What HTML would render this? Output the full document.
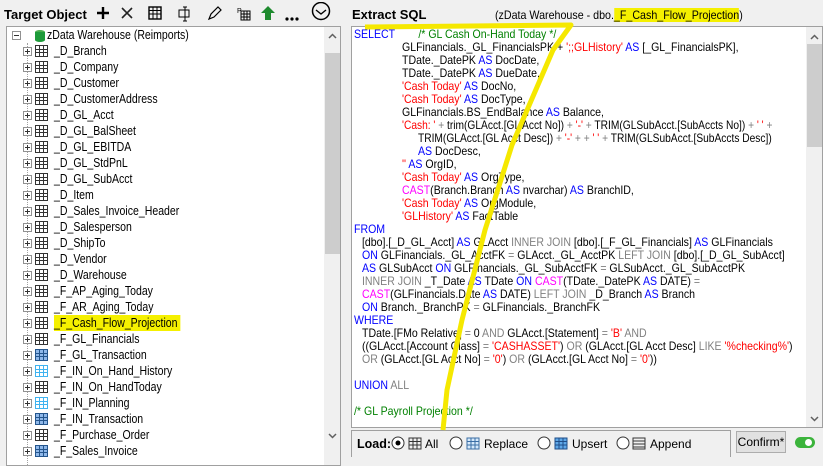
<!DOCTYPE html>
<html><head><meta charset="utf-8"><style>
*{margin:0;padding:0;box-sizing:border-box}
body{width:823px;height:456px;background:#f0f0f0;font-family:"Liberation Sans",sans-serif;font-size:12px;position:relative;overflow:hidden;color:#000}
.abs{position:absolute;white-space:nowrap}
.lp{position:absolute;left:6px;top:26px;width:335px;height:440px;border:1px solid #a0a0a0;background:#fff;overflow:hidden}
.sb{position:absolute;left:317px;top:0;width:17px;height:440px;background:#f0f0f0}
.thumb{position:absolute;left:1px;top:26px;width:15px;height:201px;background:#cdcdcd}
.row{position:absolute;left:0;height:16px;font-size:13px;line-height:16px;white-space:nowrap;width:310px}
.exp{position:absolute;width:9px;height:9px;border:1px solid #919191;background:#fff;top:4px}
.exp:before{content:"";position:absolute;left:1px;top:3px;width:5px;height:1px;background:#333}
.exp.p:after{content:"";position:absolute;left:3px;top:1px;width:1px;height:5px;background:#333}
.gi{position:absolute;left:28px;top:2px;width:13px;height:12px;border:1px solid #333;
background:linear-gradient(#333,#333) 0 3px/100% 1px no-repeat,linear-gradient(#333,#333) 0 6px/100% 1px no-repeat,linear-gradient(#333,#333) 3px 0/1px 100% no-repeat,linear-gradient(#333,#333) 7px 0/1px 100% no-repeat,#fff}
.gi.b{border-color:#24558d;background:linear-gradient(#24558d,#24558d) 0 3px/100% 1px no-repeat,linear-gradient(#24558d,#24558d) 0 6px/100% 1px no-repeat,linear-gradient(#24558d,#24558d) 3px 0/1px 100% no-repeat,linear-gradient(#24558d,#24558d) 7px 0/1px 100% no-repeat,#8fb8ea}
.gi.c{border-color:#3fb3f0;background:linear-gradient(#3fb3f0,#3fb3f0) 0 3px/100% 1px no-repeat,linear-gradient(#3fb3f0,#3fb3f0) 0 6px/100% 1px no-repeat,linear-gradient(#3fb3f0,#3fb3f0) 3px 0/1px 100% no-repeat,linear-gradient(#3fb3f0,#3fb3f0) 7px 0/1px 100% no-repeat,#fff}
.rt{position:absolute;left:47px;top:0;display:inline-block;transform:scaleX(.81);transform-origin:0 0}
.sql{position:absolute;left:351px;top:26px;width:472px;height:402px;border:1px solid #a0a0a0;background:#fff;overflow:hidden}
.sb2{position:absolute;left:454px;top:0;width:17px;height:400px;background:#f0f0f0}
.ln{position:absolute;font-size:12px;line-height:13px;white-space:nowrap;transform:scaleX(.88);transform-origin:0 0}
.k{color:#0000ff}.s{color:#ff0000}.g{color:#808080}.m{color:#ff00ff}.c{color:#008000}
.dot{position:absolute;width:1px;border-left:1px dotted #a0a0a0}
</style></head><body>
<div class="abs" style="left:4px;top:7px;font-weight:bold;font-size:13px">Target Object</div>
<svg class="abs" style="left:94px;top:2px" width="245" height="24" viewBox="0 0 245 24">
<path d="M9 5v12M3 11h12" stroke="#000" stroke-width="2.4"/>
<path d="M28 6l10 10M38 6L28 16" stroke="#222" stroke-width="1.6"/>
<rect x="55" y="5" width="12" height="12" fill="none" stroke="#000" stroke-width="1.4"/><path d="M55 8.5h12M55 12h12M59 5v12M63 5v12" stroke="#000"/>
<rect x="85" y="8" width="10" height="7" fill="none" stroke="#000"/><path d="M91 5v14M89 5h4M89 19h4" stroke="#000"/>
<path d="M115 17l2-5 7-7 3 3-7 7z M115 17l5-2" fill="none" stroke="#000" stroke-width="1.2"/>
<text x="143" y="11" font-size="7" font-family="Liberation Sans">P</text><rect x="147" y="9" width="9" height="9" fill="none" stroke="#000"/><path d="M147 12h9M147 15h9M150 9v9M153 9v9" stroke="#000"/>
<path d="M174 4l7 7h-4v7h-6v-7h-4z" fill="#1e8a2e"/>
<circle cx="193" cy="17" r="1.6"/><circle cx="198" cy="17" r="1.6"/><circle cx="203" cy="17" r="1.6"/>
<circle cx="227" cy="9" r="8.5" fill="none" stroke="#000" stroke-width="1.5"/><path d="M222 8l5 4 5-4" fill="none" stroke="#000" stroke-width="1.4"/>
</svg>
<div class="lp">
<div class="dot" style="top:16px;height:424px;left:20px"></div>
<div class="row" style="top:0;left:0"><div class="exp" style="left:5px"></div>
<svg style="position:absolute;left:27px;top:2px" width="12" height="13"><ellipse cx="6" cy="3" rx="5" ry="2" fill="#4caf50"/><rect x="1" y="3" width="10" height="8" fill="#1e9b3a"/><ellipse cx="6" cy="11" rx="5" ry="2" fill="#1e9b3a"/></svg>
<span class="rt" style="left:40px">zData Warehouse (Reimports)</span></div>
<div id="rows"></div>
<div class="sb"><svg style="position:absolute;left:4px;top:6px" width="9" height="6"><path d="M1 5l3.5-3.5L8 5" fill="none" stroke="#606060" stroke-width="1.5"/></svg><div class="thumb"></div>
<svg style="position:absolute;left:4px;top:406px" width="9" height="6"><path d="M1 1l3.5 3.5L8 1" fill="none" stroke="#606060" stroke-width="1.5"/></svg></div>
</div>
<div class="abs" style="left:352px;top:7px;font-weight:bold;font-size:13px">Extract SQL</div>
<div class="abs" style="left:495px;top:8px;font-size:12px;transform:scaleX(.89);transform-origin:0 0">(zData Warehouse - dbo.<span style="background:#f5f000">_F_Cash_Flow_Projection</span>)</div>
<div class="sql">
<div class="ln" style="left:2px;top:1px"><span class="k">SELECT</span> &nbsp; &nbsp; &nbsp; &nbsp;<span class="c">/* GL Cash On-Hand Today */</span></div>
<div class="ln" style="left:50px;top:14px">GLFinancials._GL_FinancialsPK + <span class="s">';;GLHistory'</span> <span class="k">AS</span> [_GL_FinancialsPK],</div>
<div class="ln" style="left:50px;top:27px">TDate._DatePK <span class="k">AS</span> DocDate,</div>
<div class="ln" style="left:50px;top:40px">TDate._DatePK <span class="k">AS</span> DueDate,</div>
<div class="ln" style="left:50px;top:53px"><span class="s">'Cash Today'</span> <span class="k">AS</span> DocNo,</div>
<div class="ln" style="left:50px;top:66px"><span class="s">'Cash Today'</span> <span class="k">AS</span> DocType,</div>
<div class="ln" style="left:50px;top:79px">GLFinancials.BS_EndBalance <span class="k">AS</span> Balance,</div>
<div class="ln" style="left:50px;top:92px;font-size:11.6px"><span class="s">'Cash: '</span> <span class="g">+</span> trim(GLAcct.[GL Acct No]) <span class="g">+</span> <span class="s">'-'</span> <span class="g">+</span> TRIM(GLSubAcct.[SubAccts No]) <span class="g">+</span> <span class="s">' '</span> <span class="g">+</span></div>
<div class="ln" style="left:66px;top:105px;font-size:11.6px">TRIM(GLAcct.[GL Acct Desc]) <span class="g">+</span> <span class="s">'-'</span> <span class="g">+ +</span> <span class="s">' '</span> <span class="g">+</span> TRIM(GLSubAcct.[SubAccts Desc])</div>
<div class="ln" style="left:66px;top:118px"><span class="k">AS</span> DocDesc,</div>
<div class="ln" style="left:50px;top:131px"><span class="s">''</span> <span class="k">AS</span> OrgID,</div>
<div class="ln" style="left:50px;top:144px"><span class="s">'Cash Today'</span> <span class="k">AS</span> OrgType,</div>
<div class="ln" style="left:50px;top:157px"><span class="m">CAST</span>(Branch.Branch <span class="k">AS</span> nvarchar) <span class="k">AS</span> BranchID,</div>
<div class="ln" style="left:50px;top:170px"><span class="s">'Cash Today'</span> <span class="k">AS</span> OrgModule,</div>
<div class="ln" style="left:50px;top:183px"><span class="s">'GLHistory'</span> <span class="k">AS</span> FactTable</div>
<div class="ln k" style="left:2px;top:196px">FROM</div>
<div class="ln" style="left:10px;top:209px">[dbo].[_D_GL_Acct] <span class="k">AS</span> GLAcct <span class="g">INNER JOIN</span> [dbo].[_F_GL_Financials] <span class="k">AS</span> GLFinancials</div>
<div class="ln" style="left:10px;top:222px"><span class="k">ON</span> GLFinancials._GL_AcctFK <span class="g">=</span> GLAcct._GL_AcctPK <span class="g">LEFT JOIN</span> [dbo].[_D_GL_SubAcct]</div>
<div class="ln" style="left:10px;top:235px"><span class="k">AS</span> GLSubAcct <span class="k">ON</span> GLFinancials._GL_SubAcctFK <span class="g">=</span> GLSubAcct._GL_SubAcctPK</div>
<div class="ln" style="left:10px;top:248px"><span class="g">INNER JOIN</span> _T_Date <span class="k">AS</span> TDate <span class="k">ON</span> <span class="m">CAST</span>(TDate._DatePK <span class="k">AS</span> DATE) <span class="g">=</span></div>
<div class="ln" style="left:10px;top:261px"><span class="m">CAST</span>(GLFinancials.Date <span class="k">AS</span> DATE) <span class="g">LEFT JOIN</span> _D_Branch <span class="k">AS</span> Branch</div>
<div class="ln" style="left:10px;top:274px"><span class="k">ON</span> Branch._BranchPK <span class="g">=</span> GLFinancials._BranchFK</div>
<div class="ln k" style="left:2px;top:287px">WHERE</div>
<div class="ln" style="left:10px;top:300px">TDate.[FMo Relative] <span class="g">=</span> 0 <span class="g">AND</span> GLAcct.[Statement] <span class="g">=</span> <span class="s">'B'</span> <span class="g">AND</span></div>
<div class="ln" style="left:10px;top:313px">((GLAcct.[Account Class] <span class="g">=</span> <span class="s">'CASHASSET'</span>) <span class="g">OR</span> (GLAcct.[GL Acct Desc] <span class="g">LIKE</span> <span class="s">'%checking%'</span>)</div>
<div class="ln" style="left:10px;top:326px"><span class="g">OR</span> (GLAcct.[GL Acct No] <span class="g">=</span> <span class="s">'0'</span>) <span class="g">OR</span> (GLAcct.[GL Acct No] <span class="g">=</span> <span class="s">'0'</span>))</div>
<div class="ln" style="left:2px;top:352px"><span class="k">UNION</span> <span class="g">ALL</span></div>
<div class="ln c" style="left:2px;top:378px">/* GL Payroll Projection */</div>
<div class="sb2"><svg style="position:absolute;left:4px;top:7px" width="9" height="6"><path d="M1 5l3.5-3.5L8 5" fill="none" stroke="#606060" stroke-width="1.5"/></svg>
<div style="position:absolute;left:1px;top:17px;width:15px;height:103px;background:#cdcdcd"></div>
<svg style="position:absolute;left:4px;top:389px" width="9" height="6"><path d="M1 1l3.5 3.5L8 1" fill="none" stroke="#606060" stroke-width="1.5"/></svg></div>
</div>
<div style="position:absolute;left:351px;top:430px;width:380px;height:27px;border:1px solid #a0a0a0;border-bottom:none"></div>
<div class="abs" style="left:357px;top:437px;font-weight:bold;font-size:12.5px">Load:</div>
<svg class="abs" style="left:390px;top:434px" width="330" height="20">
<circle cx="8" cy="9" r="6" fill="#fff" stroke="#333"/><circle cx="8" cy="9" r="2.5" fill="#000"/>
<g fill="none" stroke="#333"><rect x="19" y="4" width="12" height="11"/><path d="M19 7.5h12M19 11h12M23 4v11M27 4v11"/></g>
<text x="35" y="14" font-size="12" font-family="Liberation Sans">All</text>
<circle cx="66" cy="9" r="6" fill="#fff" stroke="#333"/>
<rect x="77" y="4" width="12" height="11" fill="#d6e9fb" stroke="#3b6ea5"/><path d="M77 7.5h12M77 11h12M81 4v11M85 4v11" stroke="#3b6ea5"/>
<text x="94" y="14" font-size="12" font-family="Liberation Sans">Replace</text>
<circle cx="154" cy="9" r="6" fill="#fff" stroke="#333"/>
<rect x="165" y="4" width="12" height="11" fill="#5fa8e8" stroke="#1f4e89"/><path d="M165 7.5h12M165 11h12M169 4v11M173 4v11" stroke="#1f4e89"/>
<text x="182" y="14" font-size="12" font-family="Liberation Sans">Upsert</text>
<circle cx="233" cy="9" r="6" fill="#fff" stroke="#333"/>
<g fill="none" stroke="#333"><rect x="243" y="4" width="12" height="11"/><path d="M243 7h12M243 10h12M243 13h12"/></g>
<text x="260" y="14" font-size="12" font-family="Liberation Sans">Append</text>
</svg>
<div style="position:absolute;left:736px;top:431px;width:50px;height:22px;background:#e1e1e1;border:1px solid #adadad;font-size:12px;line-height:20px;text-align:center">Confirm*</div>
<div style="position:absolute;left:795px;top:437px;width:20px;height:11px;border-radius:6px;background:#3cb43c"></div>
<div style="position:absolute;left:805px;top:439px;width:7px;height:7px;border-radius:50%;background:#fff"></div>
<svg style="position:absolute;left:0;top:0" width="823" height="456"><polyline points="365,27 571,25 553,50 512,145 485,230 462,320 447,390 443,430" fill="none" stroke="#f5e800" stroke-width="5" stroke-linejoin="round"/></svg>
<script>
var items=[["_D_Branch",""],["_D_Company",""],["_D_Customer",""],["_D_CustomerAddress",""],["_D_GL_Acct",""],["_D_GL_BalSheet",""],["_D_GL_EBITDA",""],["_D_GL_StdPnL",""],["_D_GL_SubAcct",""],["_D_Item",""],["_D_Sales_Invoice_Header",""],["_D_Salesperson",""],["_D_ShipTo",""],["_D_Vendor",""],["_D_Warehouse",""],["_F_AP_Aging_Today",""],["_F_AR_Aging_Today",""],["_F_Cash_Flow_Projection","h"],["_F_GL_Financials",""],["_F_GL_Transaction","b"],["_F_IN_On_Hand_History","c"],["_F_IN_On_HandToday",""],["_F_IN_Planning","c"],["_F_IN_Transaction","b"],["_F_Purchase_Order",""],["_F_Sales_Invoice","b"]];
var h="";items.forEach(function(it,i){var y=16+i*16;
h+='<div class="row" style="top:'+y+'px"><div class="exp p" style="left:16px"></div><div class="gi '+(it[1]=="b"||it[1]=="c"?it[1]:"")+'"></div><span class="rt" style="'+(it[1]=="h"?"background:#f5f000;padding-right:4px":"")+'">'+it[0]+'</span></div>';});
document.getElementById("rows").innerHTML=h;
</script>
</body></html>
